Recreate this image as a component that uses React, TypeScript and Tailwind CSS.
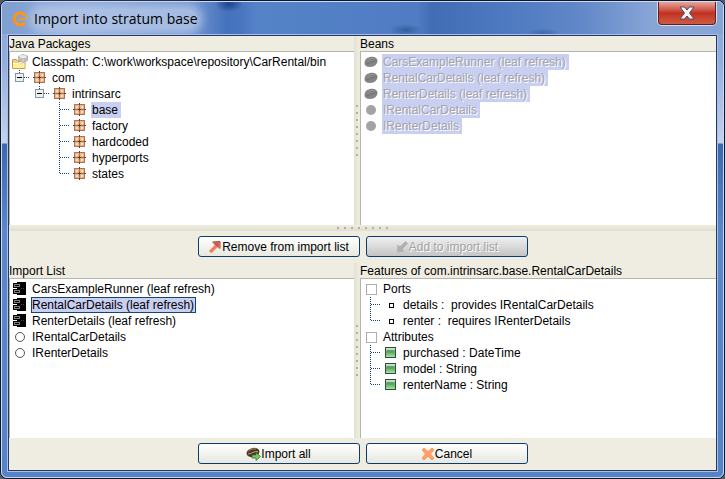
import type { ReactNode } from "react";

function PackageIcon() {
  return (
    <svg width="14" height="14" viewBox="0 0 14 14" shapeRendering="crispEdges" aria-hidden="true">
      <rect x="1" y="1" width="11" height="11" fill="#b0745a" />
      <rect x="2" y="2" width="4" height="4" fill="#e2b48a" />
      <rect x="7" y="2" width="4" height="4" fill="#e2b48a" />
      <rect x="2" y="7" width="4" height="4" fill="#e2b48a" />
      <rect x="7" y="7" width="4" height="4" fill="#e2b48a" />
      <rect x="3" y="3" width="2" height="2" fill="#f6e2b0" />
      <rect x="8" y="3" width="2" height="2" fill="#f6e2b0" />
      <rect x="3" y="8" width="2" height="2" fill="#f6e2b0" />
      <rect x="8" y="8" width="2" height="2" fill="#f6e2b0" />
      <path d="M6.500 0v2M6.500 11v2M0 6.500h2M11 6.500h2M5 6.500h3M6.500 5v3" stroke="#703828" />
    </svg>
  );
}

function FolderIcon() {
  return (
    <svg width="16" height="16" viewBox="0 0 16 16" aria-hidden="true">
      <path d="M.5 14.500v-9h4l1.500 2h7v7z" fill="#f5d283" stroke="#cf9a48" />
      <path d="M1 14V9.500h11.500V14z" fill="#fdf0a4" />
      <path d="M1 9.500h5l1-1h5.500" stroke="#fffbe0" fill="none" />
      <path d="M6.500 2.500L11 .5l4.500 1.500v4.500l-4.500 2L6.500 6.500z" fill="#bdbdbd" stroke="#a2a2a2" strokeWidth=".7" />
      <ellipse cx="11" cy="2.500" rx="3.500" ry="1.600" fill="#ececec" />
      <path d="M11 4.500v3.500" stroke="#d8d8d8" />
    </svg>
  );
}

type GuideKind = "none" | "tee" | "end" | "expander";

function Guide({ kind }: { kind: GuideKind }) {
  return (
    <svg className="shrink-0" width="20" height="16" viewBox="0 0 20 16" shapeRendering="crispEdges" aria-hidden="true">
      {kind !== "none" && (
        <g stroke="#14447a" strokeDasharray="1 1" fill="none">
          <path d={kind === "tee" ? "M9.500 0V16" : "M9.500 0V8"} />
          <path d="M10 7.500H22" />
        </g>
      )}
      {kind === "expander" && (
        <g>
          <rect x="5.500" y="3.500" width="8" height="8" rx="1" fill="#f0f0ea" stroke="#7f98b4" />
          <path d="M7 7.500h5" stroke="#000" />
        </g>
      )}
    </svg>
  );
}

function TreeRow({ guides = [], icon, label, selected = false }: { guides?: GuideKind[]; icon: ReactNode; label: string; selected?: boolean }) {
  return (
    <li className="flex h-4 items-center">
      {guides.map((kind, i) => (
        <Guide key={i} kind={kind} />
      ))}
      <span className="flex h-4 w-5 shrink-0 items-center justify-center">{icon}</span>
      <span className={"ml-px px-px whitespace-pre" + (selected ? " bg-[#c8cff0] pr-[3px]" : "")}>{label}</span>
    </li>
  );
}

function BeanIcon() {
  return (
    <svg width="14" height="12" viewBox="0 0 14 12" aria-hidden="true">
      <path d="M.5 7C.5 3 4 .8 8 .8c3.500 0 5.500 1.700 5.500 4C13.500 8.500 10 11 6 11 2.500 11 .5 9.500.5 7z" fill="#848484" />
      <path d="M2 7.800c3 .5 6-3 10.500-3" stroke="#6c6c6c" fill="none" strokeWidth=".8" />
      <path d="M3.500 4.500c2-1.800 4.500-2.300 6.500-2" stroke="#969696" fill="none" />
    </svg>
  );
}

function DiscIcon() {
  return <span className="size-[10px] rounded-full bg-[#a3a3a3]" />;
}

function ComponentIcon() {
  return (
    <svg width="14" height="14" viewBox="0 0 14 14" shapeRendering="crispEdges" aria-hidden="true">
      <rect x="4" y="0" width="9" height="13" fill="#000" />
      <rect x="0" y="1" width="8" height="5" fill="#000" />
      <rect x="0" y="7" width="8" height="5" fill="#000" />
      <rect x="1.500" y="2.500" width="5" height="2" fill="#000" stroke="#7c7c7c" />
      <rect x="1.500" y="8.500" width="5" height="2" fill="#000" stroke="#7c7c7c" />
      <path d="M8 6.500h1M10 6.500h1" stroke="#444" />
    </svg>
  );
}

function RingIcon() {
  return <span className="size-[10px] rounded-full border border-[#555] bg-white" />;
}

function GroupBox() {
  return <span className="size-[11px] border border-[#adadad] bg-white" />;
}

function PortIcon() {
  return <span className="size-[5px] border border-black bg-white" />;
}

function AttributeIcon() {
  return (
    <svg width="12" height="12" viewBox="0 0 12 12" shapeRendering="crispEdges" aria-hidden="true">
      <rect x=".5" y=".5" width="10" height="10" rx="1" fill="#6fb676" stroke="#2d5238" />
      <rect x="1" y="1" width="9" height="2" fill="#c3dcc2" />
      <rect x="2" y="3" width="7" height="3" fill="#61a169" />
      <rect x="2" y="6" width="7" height="2" fill="#78be7b" />
      <rect x="1" y="8" width="9" height="2" fill="#92dc91" />
    </svg>
  );
}

function Panel({ title, children }: { title: string; children: ReactNode }) {
  return (
    <section className="flex min-w-0 flex-col">
      <h2 className="h-[15px] leading-[16px] whitespace-nowrap">{title}</h2>
      <div className="flex-1 border-t border-l border-[#b5b5ac] bg-white pt-[2px]">{children}</div>
    </section>
  );
}

function VerticalGrip() {
  return (
    <div className="flex flex-col items-center justify-center gap-[5px] bg-linear-to-r from-[#e2e2d4] to-[#efede1]">
      {Array.from({ length: 8 }, (_, i) => (
        <span key={i} className="size-[2px] bg-[#aeaea4]" />
      ))}
    </div>
  );
}

function HorizontalGrip() {
  return (
    <div className="flex h-[6px] items-center justify-center gap-[5px] bg-linear-to-b from-[#efede1] to-[#dfdfd0]">
      {Array.from({ length: 8 }, (_, i) => (
        <span key={i} className="size-[2px] bg-[#aeaea4]" />
      ))}
    </div>
  );
}

const buttonBase = "flex h-[21px] w-[162px] items-center justify-center rounded-[3px] border border-[#0b3c6f] ";

function DialogButton({ icon, children, disabled = false }: { icon: ReactNode; children: ReactNode; disabled?: boolean }) {
  return (
    <button
      type="button"
      disabled={disabled}
      className={
        buttonBase +
        (disabled
          ? "bg-linear-to-b from-[#f0f0f0] to-[#c4c4c4] text-[#a2a2a2] [text-shadow:1px_1px_0_#fff]"
          : "bg-linear-to-b from-white to-[#e8e8e0]")
      }
    >
      {icon}
      <span>{children}</span>
    </button>
  );
}

const beans = ["CarsExampleRunner (leaf refresh)", "RentalCarDetails (leaf refresh)", "RenterDetails (leaf refresh)", "IRentalCarDetails", "IRenterDetails"];
const packages = ["base", "factory", "hardcoded", "hyperports", "states"];

export default function App() {
  return (
    <div className="flex min-h-screen bg-[#555a66] font-['Liberation_Sans',Arial,sans-serif] text-[12px] leading-[16px] text-black">
      <div className="flex flex-1 rounded-[7px] border border-[#10152c] bg-[#5583c6]">
        <main className="flex flex-1 flex-col rounded-[6px] border border-[#c9dcf4] bg-[linear-gradient(to_bottom,#89a6d6_0px,#93aede_60px,#c4d2ea_141px,#3c68b0_142px,#5a88cb_230px,#5583c6_100%)] px-[5px] pb-[5px]">
          <header className="-mx-[5px] flex h-[32px] items-start justify-between rounded-t-[5px] bg-[radial-gradient(ellipse_14px_8px_at_227px_2px,#1f438a,transparent),radial-gradient(ellipse_16px_6px_at_404px_28px,#345d9f,transparent),radial-gradient(ellipse_16px_5px_at_541px_31px,#3f68ae,transparent),linear-gradient(to_right,#7f9fd0_0px,#8fabda_70px,#7094d0_190px,#4572bd_225px,#4a76c0_240px,#5583c8_255px,#4f7cc2_415px,#416db4_430px,#4c79c0_500px,#6288c8_580px,#88a5d6_650px,#86a4d4_100%)] pl-[10px]">
            <div className="flex h-full items-center gap-[6px] pt-[2px]">
              <svg width="16" height="16" viewBox="0 0 16 16" fill="none" aria-hidden="true">
                <path d="M13 4.200A6 6 0 1 0 13 11.800" stroke="#ff9410" strokeWidth="3.200" />
                <path d="M14.500 8H9.500" stroke="#ff9410" strokeWidth="1.600" />
                <circle cx="8.500" cy="8" r="1.600" fill="#ff9410" />
                <path d="M12.500 3l2.500 3-2 2" stroke="#ff9410" strokeWidth="1.400" />
              </svg>
              <h1 className="rounded-full bg-[#b9cbea]/70 font-['Open_Sans',sans-serif] text-[14px] leading-5 whitespace-nowrap shadow-[0_0_8px_5px_rgba(185,203,234,0.7)]">
                Import into stratum base
              </h1>
            </div>
            <button
              type="button"
              aria-label="Close"
              className="mr-[7px] flex h-[23px] w-[58px] items-center justify-center rounded-b-[4px] border border-t-0 border-[#57202a] bg-linear-to-b from-[#e5a59c] from-0% via-[#c03022] via-50% to-[#cf5b42] shadow-[0_0_0_1px_#d5dcee]"
            >
              <svg width="16" height="14" viewBox="0 0 16 14" aria-hidden="true">
                <path d="M1 1h4.500L8 4l2.500-3H15l-4.500 6 4.500 6h-4.500L8 10l-2.500 3H1l4.500-6z" fill="#f4f4f4" stroke="#4b4f63" />
              </svg>
            </button>
          </header>

          <div className="flex flex-1 flex-col border border-[#a9c0e4]">
            <div className="flex flex-1 flex-col border border-[#26386b] bg-[#efede1]">
              <div className="grid flex-[189] grid-cols-[minmax(0,345fr)_6px_minmax(0,356fr)]">
                <Panel title="Java Packages">
                  <ul>
                    <TreeRow icon={<FolderIcon />} label="Classpath: C:\work\workspace\repository\CarRental/bin" />
                    <TreeRow guides={["expander"]} icon={<PackageIcon />} label="com" />
                    <TreeRow guides={["none", "expander"]} icon={<PackageIcon />} label="intrinsarc" />
                    {packages.map((name, i) => (
                      <TreeRow
                        key={name}
                        guides={["none", "none", i === packages.length - 1 ? "end" : "tee"]}
                        icon={<PackageIcon />}
                        label={name}
                        selected={name === "base"}
                      />
                    ))}
                  </ul>
                </Panel>
                <VerticalGrip />
                <Panel title="Beans">
                  <ul className="text-[#a3a3ab] [text-shadow:1px_1px_0_#fff]">
                    {beans.map((name, i) => (
                      <TreeRow key={name} icon={i < 3 ? <BeanIcon /> : <DiscIcon />} label={name} selected />
                    ))}
                  </ul>
                </Panel>
              </div>

              <HorizontalGrip />

              <div className="flex justify-center gap-[6px] pt-[5px] pb-[6px]">
                <DialogButton
                  icon={
                    <svg width="14" height="14" viewBox="0 0 14 14" aria-hidden="true">
                      <path d="M1 11L7 5 4.500 2.500 12 1.500 11.500 9 9.500 7 3.500 13z" fill="#ee7d58" stroke="#e8a088" strokeWidth=".5" />
                      <path d="M5 2.500h5.500v5.500L8 5.500z" fill="#d4533c" />
                      <path d="M4.500 2L12 1.500V8.500" fill="none" stroke="#8a4c52" />
                    </svg>
                  }
                >
                  Remove from import list
                </DialogButton>
                <DialogButton
                  disabled
                  icon={
                    <svg width="14" height="14" viewBox="0 0 14 14" aria-hidden="true">
                      <path d="M10.500 1L13 3.500 7.500 9l2 2.500-7.500 1 .5-8L5 6.500z" fill="#b0b0b0" />
                    </svg>
                  }
                >
                  Add to import list
                </DialogButton>
              </div>

              <div className="grid flex-[175] grid-cols-[minmax(0,345fr)_6px_minmax(0,356fr)]">
                <Panel title="Import List">
                  <ul>
                    {beans.map((name, i) => (
                      <li key={name} className="flex h-4 items-center">
                        <span className="flex w-5 shrink-0 items-center justify-center">{i < 3 ? <ComponentIcon /> : <RingIcon />}</span>
                        <span
                          className={
                            "ml-px whitespace-nowrap " + (i === 1 ? "border border-[#14447a] bg-[#c8cff0] pr-px leading-[14px]" : "px-px")
                          }
                        >
                          {name}
                        </span>
                      </li>
                    ))}
                  </ul>
                </Panel>
                <VerticalGrip />
                <Panel title="Features of com.intrinsarc.base.RentalCarDetails">
                  <ul>
                    <TreeRow icon={<GroupBox />} label="Ports" />
                    <TreeRow guides={["tee"]} icon={<PortIcon />} label="details :  provides IRentalCarDetails" />
                    <TreeRow guides={["end"]} icon={<PortIcon />} label="renter :  requires IRenterDetails" />
                    <TreeRow icon={<GroupBox />} label="Attributes" />
                    <TreeRow guides={["tee"]} icon={<AttributeIcon />} label="purchased : DateTime" />
                    <TreeRow guides={["tee"]} icon={<AttributeIcon />} label="model : String" />
                    <TreeRow guides={["end"]} icon={<AttributeIcon />} label="renterName : String" />
                  </ul>
                </Panel>
              </div>

              <div className="flex justify-center gap-[6px] pt-[5px] pb-[6px]">
                <DialogButton
                  icon={
                    <svg width="15" height="14" viewBox="0 0 15 14" aria-hidden="true">
                      <ellipse cx="7" cy="5.500" rx="6.500" ry="4.500" transform="rotate(-15 7 5.500)" fill="#4c3422" />
                      <path d="M2.500 4.500c2-2.500 5-3 7.500-2.500" stroke="#a98660" fill="none" />
                      <path d="M2 7c3 0 6-3 10-2.500" stroke="#d9c3a0" fill="none" strokeWidth=".8" />
                      <path d="M6 8h4V5.500l4.500 4-4.500 4V11H6z" fill="#7cc465" stroke="#2f7a2c" strokeWidth=".8" />
                    </svg>
                  }
                >
                  Import all
                </DialogButton>
                <DialogButton
                  icon={
                    <svg width="14" height="14" viewBox="0 0 14 14" aria-hidden="true">
                      <path d="M3 1l4 3.500L11 1l2 2-3.500 4 3.500 4-2 2-4-3.500L3 13l-2-2 3.500-4L1 3z" fill="#ffa066" stroke="#f5905c" strokeWidth=".8" />
                    </svg>
                  }
                >
                  Cancel
                </DialogButton>
              </div>
            </div>
          </div>
        </main>
      </div>
    </div>
  );
}
